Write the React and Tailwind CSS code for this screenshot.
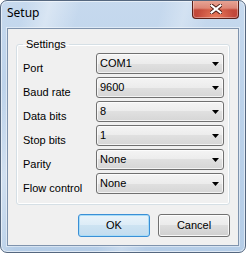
import React from "react";

const rows = [
  ["Port", "COM1"],
  ["Baud rate", "9600"],
  ["Data bits", "8"],
  ["Stop bits", "1"],
  ["Parity", "None"],
  ["Flow control", "None"],
];

function Combo({ value }) {
  return (
    <div className="w-[128px] h-[21px] rounded-[3px] border border-[#707070] bg-[linear-gradient(to_bottom,#f4f4f4_0%,#ececec_50%,#e0e0e0_50%,#d6d6d6_100%)] shadow-[inset_0_0_0_1px_rgba(255,255,255,0.7)] flex items-start justify-between pl-[3px] pr-[4px]">
      <span className="pt-[3px] leading-[13px] text-[11px] text-black">{value}</span>
      <svg width="7" height="4" viewBox="0 0 7 4" className="mt-[8px]">
        <path d="M0 0H7L3.5 4Z" fill="#000" />
      </svg>
    </div>
  );
}

export default function App() {
  return (
    <div className="w-[246px] h-[253px] rounded-[7px] border border-[#55677f] bg-[linear-gradient(105deg,rgba(255,255,255,0)_8%,rgba(255,255,255,0.35)_16%,rgba(255,255,255,0)_26%,rgba(255,255,255,0)_52%,rgba(255,255,255,0.25)_60%,rgba(255,255,255,0)_68%),linear-gradient(to_bottom,#c6d9ee_0%,#bcd2ea_40%,#b5cde7_100%)] shadow-[inset_0_0_0_1px_rgba(255,255,255,0.55)] flex flex-col px-[6px] pb-[6px] font-['Liberation_Sans',Arial,sans-serif] overflow-hidden">
      {/* Title bar */}
      <div className="h-[27px] flex items-start justify-between shrink-0">
        <span className="pt-[4px] leading-[16px] text-[12px] text-black font-['Noto_Sans',sans-serif]">
          Setup
        </span>
        <div className="-mt-px w-[47px] h-[19px] rounded-b-[4px] border border-t-0 border-[#5b2018] bg-[radial-gradient(ellipse_at_50%_100%,rgba(255,150,110,0.7)_0%,rgba(255,150,110,0)_60%),linear-gradient(to_bottom,#e9a898_0%,#dc8677_45%,#c44a3a_55%,#c0453a_100%)] shadow-[inset_0_0_0_1px_rgba(255,255,255,0.35)] flex items-center justify-center">
          <svg width="12" height="10" viewBox="0 0 12 10">
            <path d="M1.5 1.5L10.5 8.5M10.5 1.5L1.5 8.5" stroke="#4a1a14" strokeWidth="4" strokeLinecap="square" />
            <path d="M1.5 1.5L10.5 8.5M10.5 1.5L1.5 8.5" stroke="#ffffff" strokeWidth="2.2" strokeLinecap="square" />
          </svg>
        </div>
      </div>

      {/* Client area */}
      <div className="flex-1 border border-[#7f93ad] bg-[#f0f0f0] flex flex-col px-[8px] pt-[9px] pb-[8px] shadow-[0_0_0_1px_rgba(255,255,255,0.45)]">
        <fieldset className="w-[214px] rounded-[3px] border border-[#d5dfe5] shadow-[inset_0_0_0_1px_#ffffff] pl-[6px] pt-[2px] pb-[10px]">
          <legend className="px-[3px] leading-[13px] text-[11px] text-black">Settings</legend>
          <div className="flex flex-col gap-[3px]">
            {rows.map(([label, value]) => (
              <div key={label} className="flex items-start h-[21px]">
                <span className="w-[73px] pt-[9px] leading-[13px] text-[11px] text-black whitespace-nowrap">
                  {label}
                </span>
                <Combo value={value} />
              </div>
            ))}
          </div>
        </fieldset>

        <div className="mt-[9px] flex justify-end gap-[8px]">
          <button className="w-[72px] h-[23px] rounded-[3px] border border-[#3a8fd6] bg-[linear-gradient(to_bottom,#e9f3fa_0%,#dcecf7_50%,#cde3f2_50%,#c2dcef_100%)] shadow-[inset_0_0_0_1px_#a8dcf7] text-[11px] leading-[13px] text-black">
            OK
          </button>
          <button className="w-[72px] h-[23px] rounded-[3px] border border-[#707070] bg-[linear-gradient(to_bottom,#f2f2f2_0%,#ebebeb_50%,#dddddd_50%,#cfcfcf_100%)] shadow-[inset_0_0_0_1px_rgba(255,255,255,0.8)] text-[11px] leading-[13px] text-black">
            Cancel
          </button>
        </div>
      </div>
    </div>
  );
}
